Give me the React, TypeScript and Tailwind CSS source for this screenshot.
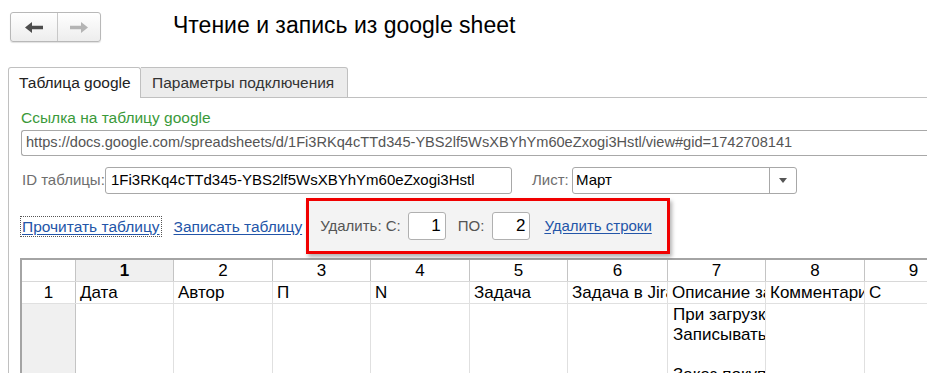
import React from 'react';

const cols = [
  { n: '1', w: 98, text: 'Дата' },
  { n: '2', w: 99, text: 'Автор' },
  { n: '3', w: 98, text: 'П' },
  { n: '4', w: 99, text: 'N' },
  { n: '5', w: 98, text: 'Задача' },
  { n: '6', w: 100, text: 'Задача в Jira' },
  { n: '7', w: 98, text: 'Описание задачи' },
  { n: '8', w: 99, text: 'Комментарий' },
  { n: '9', w: 98, text: 'С' },
];

function ArrowLeft({ color }: { color: string }) {
  return (
    <svg width="18" height="11" viewBox="0 0 18 11">
      <path d="M0 5.5 L7 0 V3.8 H18 V7.2 H7 V11 Z" fill={color} />
    </svg>
  );
}

function ArrowRight({ color }: { color: string }) {
  return (
    <svg width="18" height="11" viewBox="0 0 18 11">
      <path d="M18 5.5 L11 0 V3.8 H0 V7.2 H11 V11 Z" fill={color} />
    </svg>
  );
}

export default function App() {
  return (
    <div
      className="w-[927px] h-[373px] overflow-hidden bg-white text-[15px] text-[#333]"
      style={{ fontFamily: '"Liberation Sans", Arial, sans-serif' }}
    >
      {/* Header */}
      <div className="flex items-center pt-[12px] pl-[10px]">
        <div className="flex h-[30px] w-[91px] rounded-[3px] border border-[#b8b8b8] bg-gradient-to-b from-white to-[#ededed] shadow-[0_1px_1px_rgba(0,0,0,0.12)]">
          <div className="flex w-[47px] items-center justify-center border-r border-[#c8c8c8]">
            <ArrowLeft color="#4d4d4d" />
          </div>
          <div className="flex flex-1 items-center justify-center">
            <ArrowRight color="#b4b4b4" />
          </div>
        </div>
        <h1 className="ml-[72px] -mt-[4px] text-[23px] leading-[28px] text-black">Чтение и запись из google sheet</h1>
      </div>

      {/* Tabs */}
      <div className="mt-[25px] ml-[8px] flex h-[31px] text-[15.5px]">
        <div className="flex w-[133px] items-center rounded-t-[3px] border border-b-0 border-[#c0c0c0] bg-white pl-[10px] text-[#222]">
          Таблица google
        </div>
        <div className="flex w-[207px] items-center rounded-tr-[3px] border-t border-r border-b border-[#c0c0c0] bg-[#ececec] pl-[11px] text-[#333]">
          Параметры подключения
        </div>
        <div className="flex-1 border-b border-[#c0c0c0]" />
      </div>

      {/* Panel */}
      <div className="ml-[8px] border-l border-[#c0c0c0] pl-[12px]">
        <div className="pt-[10px] text-[15.5px] leading-[19px] text-[#3a9a3a]">Ссылка на таблицу google</div>
        <div className="mt-[3px] flex h-[26px] w-[920px] items-center rounded-l-[3px] border border-r-0 border-[#a8a8a8] pl-[4px] whitespace-nowrap text-[14.6px] text-[#555]">
          https://docs.google.com/spreadsheets/d/1Fi3RKq4cTTd345-YBS2lf5WsXBYhYm60eZxogi3Hstl/view#gid=1742708141
        </div>

        <div className="mt-[11px] flex h-[27px] items-center">
          <span className="w-[84px] pl-[1px] text-[#6e6e6e]">ID таблицы:</span>
          <div className="flex h-[27px] w-[407px] items-center rounded-[3px] border border-[#a8a8a8] pl-[5px] text-black">
            1Fi3RKq4cTTd345-YBS2lf5WsXBYhYm60eZxogi3Hstl
          </div>
          <span className="ml-[20px] w-[40px] text-[#6e6e6e]">Лист:</span>
          <div className="flex h-[27px] w-[225px] items-center rounded-[3px] border border-[#a8a8a8] text-black">
            <span className="flex-1 pl-[3px]">Март</span>
            <div className="flex h-full w-[27px] items-center justify-center border-l border-[#a8a8a8]">
              <svg width="8" height="5" viewBox="0 0 8 5">
                <path d="M0 0 H8 L4 5 Z" fill="#555" />
              </svg>
            </div>
          </div>
        </div>

        <div className="mt-[4px] flex h-[56px] items-center text-[15.5px]">
          <span className="-ml-[1px] border border-dotted border-[#555] px-[1px] leading-[19px] text-[#2355a8] underline underline-offset-2">
            Прочитать таблицу
          </span>
          <span className="ml-[12px] leading-[19px] text-[#2355a8] underline underline-offset-2">Записать таблицу</span>
          <div className="ml-[4px] flex h-[56px] w-[364px] items-center border-[3px] border-[#f00000] bg-[#f3f3f3] pl-[11px] text-[15px] shadow-[2px_3px_4px_rgba(0,0,0,0.3)]">
            <span className="text-[#555]">Удалить: С:</span>
            <div className="ml-[7px] flex h-[28px] w-[38px] items-center justify-end rounded-[3px] border border-[#b0b0b0] bg-white pr-[4px] text-[17px] text-black">
              1
            </div>
            <span className="ml-[12px] text-[#555]">ПО:</span>
            <div className="ml-[8px] flex h-[28px] w-[38px] items-center justify-end rounded-[3px] border border-[#b0b0b0] bg-white pr-[4px] text-[17px] text-black">
              2
            </div>
            <span className="ml-[14px] text-[#2355a8] underline underline-offset-2">Удалить строки</span>
          </div>
        </div>

        {/* Table */}
        <div className="mt-[4px] -ml-[1px] border-t-2 border-l-2 border-[#a4a4a4] text-[17px] text-black">
          <div className="flex h-[22px] border-b border-[#d8d8d8]">
            <div className="w-[54px] shrink-0 border-r border-[#c4c4c4] bg-white" />
            {cols.map((c) => (
              <div
                key={c.n}
                className={
                  c.n === '1'
                    ? 'flex shrink-0 items-center justify-center border-r border-[#c4c4c4] bg-[#f0f0f0] font-bold leading-[20px]'
                    : 'flex shrink-0 items-center justify-center border-r border-[#c4c4c4] bg-white leading-[20px]'
                }
                style={{ width: c.w }}
              >
                {c.n}
              </div>
            ))}
          </div>
          <div className="flex h-[22px] border-b border-[#e0e0e0]">
            <div className="flex w-[54px] shrink-0 items-center justify-center border-r border-[#c4c4c4]">1</div>
            {cols.map((c) => (
              <div
                key={c.n}
                className="shrink-0 overflow-hidden whitespace-nowrap border-r border-[#e0e0e0] pl-[4px] leading-[21px]"
                style={{ width: c.w }}
              >
                {c.text}
              </div>
            ))}
          </div>
          <div className="flex h-[80px]">
            <div className="w-[54px] shrink-0 border-r border-[#c4c4c4] bg-[#f0f0f0]" />
            {cols.map((c) => (
              <div
                key={c.n}
                className="shrink-0 overflow-hidden whitespace-nowrap border-r border-[#e0e0e0] pt-[1px] pl-[5px] leading-[20px]"
                style={{ width: c.w }}
              >
                {c.n === '7' && (
                  <>
                    <div>При загрузке данных</div>
                    <div>Записывать в таблицу</div>
                    <div>&nbsp;</div>
                    <div>Заказ покупателя</div>
                  </>
                )}
              </div>
            ))}
          </div>
        </div>
      </div>
    </div>
  );
}
